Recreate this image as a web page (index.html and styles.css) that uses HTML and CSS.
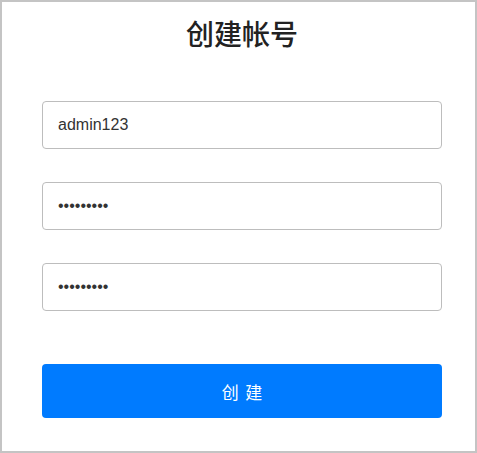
FILE: index.html
```html
<!DOCTYPE html>
<html>

<head>
	<meta http-equiv="Content-Type" content="text/html; charset=UTF-8">
	<title>创建帐号</title>
	<link rel="stylesheet" href="styles.css">
</head>

<body>
	<div class="frame">
		<h1 class="title">创建帐号</h1>
		<form class="form">
			<input class="field" type="text" value="admin123">
			<input class="field" type="password" value="123456789">
			<input class="field" type="password" value="123456789">
			<button class="btn" type="button">创 建</button>
		</form>
	</div>
</body>

</html>
```

FILE: styles.css
```css
* {
	margin: 0;
	padding: 0;
	box-sizing: border-box;
}

body {
	background: #fff;
	font-family: "Liberation Sans", "Noto Sans CJK SC", sans-serif;
}

.frame {
	width: 477px;
	height: 453px;
	border: 2px solid #c4c4c4;
	padding: 16px 33px 0 40px;
}

.title {
	font-size: 28px;
	line-height: 36px;
	font-weight: 500;
	color: #222;
	text-align: center;
	margin-bottom: 47px;
}

.form {
	display: flex;
	flex-direction: column;
	gap: 33px;
	width: 400px;
}

.field {
	height: 48px;
	border: 1px solid #bdbdbd;
	border-radius: 4px;
	padding: 0 15px;
	font-family: "Liberation Sans", sans-serif;
	font-size: 16px;
	color: #333;
	outline: none;
}

.btn {
	margin-top: 20px;
	height: 54px;
	border: none;
	border-radius: 4px;
	background: #007bff;
	color: #fff;
	font-family: "Liberation Sans", "Noto Sans CJK SC", sans-serif;
	font-size: 17px;
	letter-spacing: 1px;
	padding-left: 1px;
}
```
